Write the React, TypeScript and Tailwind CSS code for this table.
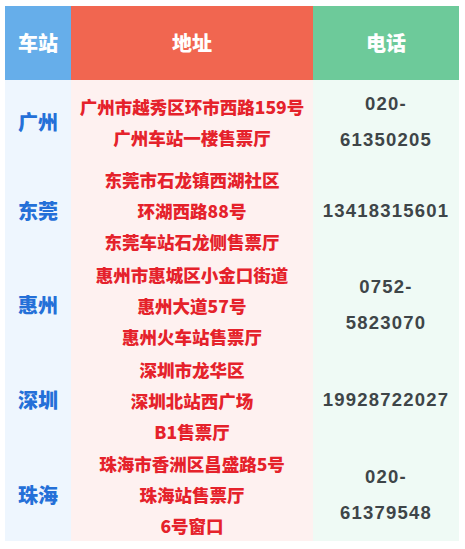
import React from "react";

const rows = [
  { city: "广州", addr: ["广州市越秀区环市西路159号", "广州车站一楼售票厅"], phone: ["020-", "61350205"], h: "h-[83px]" },
  { city: "东莞", addr: ["东莞市石龙镇西湖社区", "环湖西路88号", "东莞车站石龙侧售票厅"], phone: ["13418315601"], h: "h-[95px]" },
  { city: "惠州", addr: ["惠州市惠城区小金口街道", "惠州大道57号", "惠州火车站售票厅"], phone: ["0752-", "5823070"], h: "h-[94px]" },
  { city: "深圳", addr: ["深圳市龙华区", "深圳北站西广场", "B1售票厅"], phone: ["19928722027"], h: "h-[96px]" },
  { city: "珠海", addr: ["珠海市香洲区昌盛路5号", "珠海站售票厅", "6号窗口"], phone: ["020-", "61379548"], h: "h-[93px]" },
];

const cjk = "font-['Microsoft_YaHei','Noto_Sans_CJK_SC',sans-serif]";

export default function App() {
  return (
    <div className="w-[465px] h-[549px] bg-white pt-[6px] pl-[5px]">
      <div className={`w-[454px] flex flex-col ${cjk}`}>
        <div className="grid grid-cols-[66px_242px_146px] h-[74px] text-white text-[20px] font-extrabold">
          <div className="bg-[#66aeea] flex items-center justify-center">车站</div>
          <div className="bg-[#f16650] flex items-center justify-center">地址</div>
          <div className="bg-[#6dca9a] flex items-center justify-center">电话</div>
        </div>
        {rows.map((r) => (
          <div key={r.city} className={`grid grid-cols-[66px_242px_146px] ${r.h}`}>
            <div className="bg-[#eef6fe] flex items-center justify-center text-[20px] font-extrabold text-[#2470d8]">
              {r.city}
            </div>
            <div className="bg-[#fef1f0] flex flex-col items-center justify-center text-[17.5px] leading-[31px] font-extrabold text-[#e5222b]">
              {r.addr.map((a) => (
                <div key={a}>{a}</div>
              ))}
            </div>
            <div className="bg-[#effaf5] flex flex-col items-center justify-center font-['Liberation_Sans',Arial,sans-serif] text-[18.5px] leading-[36px] font-bold tracking-[1.2px] text-[#3e4548]">
              {r.phone.map((p) => (
                <div key={p}>{p}</div>
              ))}
            </div>
          </div>
        ))}
      </div>
    </div>
  );
}
